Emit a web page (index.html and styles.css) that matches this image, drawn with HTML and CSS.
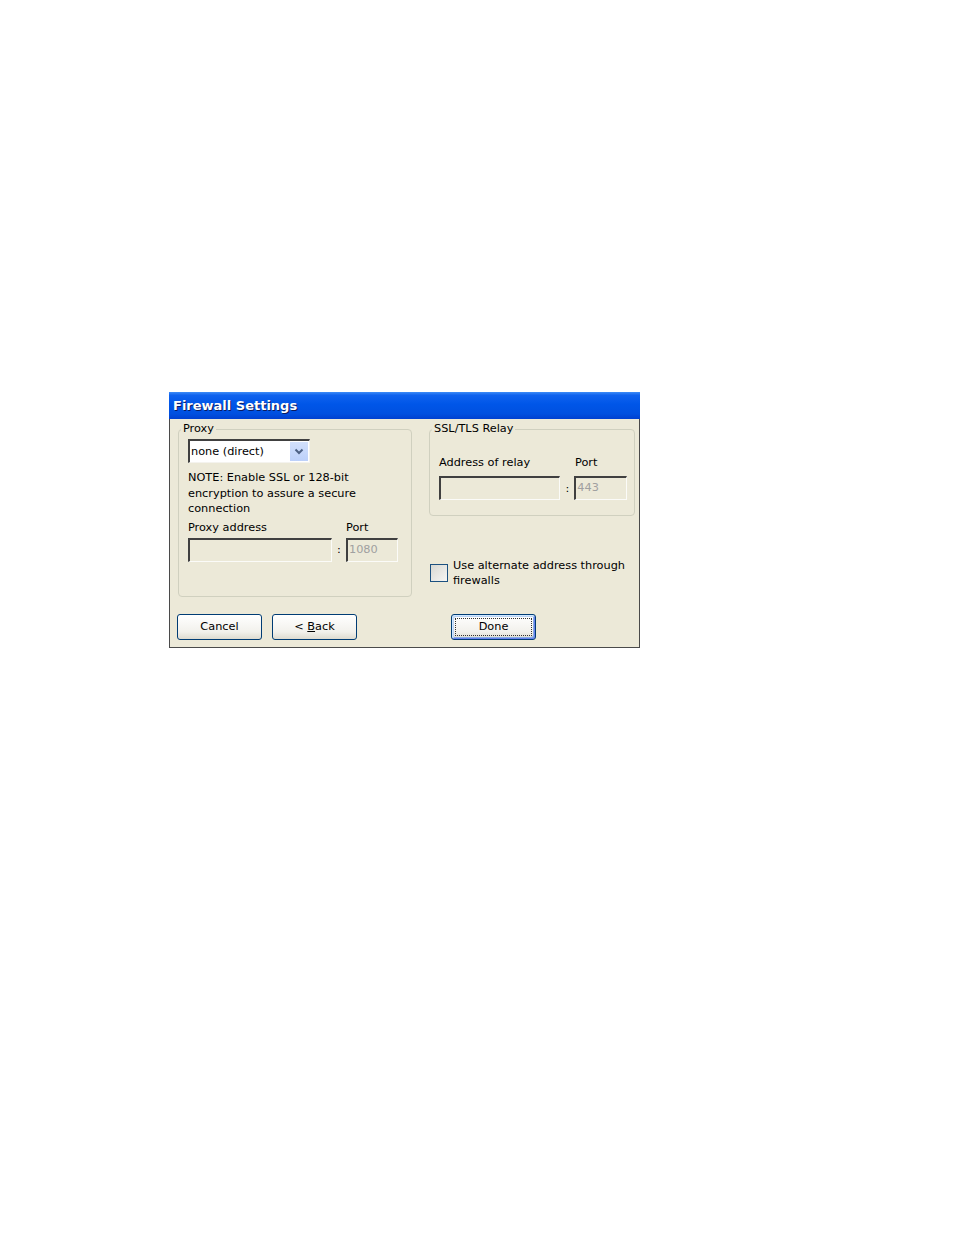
FILE: index.html
```html
<!DOCTYPE html>
<html lang="en">
<head>
    <meta charset="UTF-8">
    <title>Firewall Settings</title>
    <link rel="stylesheet" href="styles.css">
</head>
<body>
    <div class="dialog">
        <div class="titlebar">Firewall Settings</div>
        <div class="dialog-body">
            <div class="columns">
                <fieldset class="group proxy">
                    <legend>Proxy</legend>
                    <div class="combo">
                        <span class="combo-text">none (direct)</span>
                        <span class="combo-btn">
                            <svg width="10" height="7" viewBox="0 0 10 7"><path d="M1.5 1.5 L5 5 L8.5 1.5" fill="none" stroke="#4d6185" stroke-width="2"/></svg>
                        </span>
                    </div>
                    <p class="note">NOTE: Enable SSL or 128-bit encryption to assure a secure connection</p>
                    <div class="labels">
                        <span class="lbl-addr">Proxy address</span>
                        <span>Port</span>
                    </div>
                    <div class="field-row">
                        <div class="edit addr-left"></div>
                        <span class="colon">:</span>
                        <div class="edit port">1080</div>
                    </div>
                </fieldset>

                <div class="right-col">
                    <fieldset class="group relay">
                        <legend>SSL/TLS Relay</legend>
                        <div class="labels">
                            <span class="lbl-relay">Address of relay</span>
                            <span class="lbl-port">Port</span>
                        </div>
                        <div class="field-row">
                            <div class="edit addr-right"></div>
                            <span class="colon">:</span>
                            <div class="edit port">443</div>
                        </div>
                    </fieldset>
                    <div class="check">
                        <span class="box"></span>
                        <span class="check-text">Use alternate address through firewalls</span>
                    </div>
                </div>
            </div>

            <div class="buttons">
                <button class="btn">Cancel</button>
                <button class="btn">&lt; <u>B</u>ack</button>
                <button class="btn btn-default"><span class="focus">Done</span></button>
            </div>
        </div>
    </div>
</body>
</html>
```

FILE: styles.css
```css
body {
    margin: 0;
    background: white;
    font-family: 'DejaVu Sans', sans-serif;
    font-size: 11.3px;
    color: black;
}
.dialog {
    width: 469px;
    margin: 392px 0 0 169px;
    background: #ece9d8;
    border: 1px solid #4a4a4a;
    border-top: none;
}
.titlebar {
    height: 27px;
    line-height: 27px;
    padding-left: 4px;
    background: linear-gradient(#3d8cf7 0%, #0f62ee 12%, #0056e8 45%, #0050e0 80%, #0040d0 100%);
    color: white;
    font-weight: bold;
    font-size: 13px;
    text-shadow: 1px 1px 0 #0a1a60;
    margin: 0 -1px;
}
.dialog-body {
    padding: 3px 4px 7px 8px;
}
.columns {
    display: flex;
    gap: 17px;
}

/* group boxes */
.group {
    margin: 0;
    border: 1px solid #d0d0bf;
    border-radius: 4px;
    padding: 3px 7px 34px 9px;
    min-width: 0;
}
.group legend {
    padding: 0 2px;
    margin-left: -7px;
    line-height: 14px;
}
.proxy {
    width: 234px;
    flex-shrink: 0;
    box-sizing: border-box;
}
.relay {
    width: 206px;
    box-sizing: border-box;
    padding-top: 18px;
    padding-bottom: 15px;
}
.right-col {
    width: 206px;
    flex-shrink: 0;
    display: flex;
    flex-direction: column;
}

/* combo box */
.combo {
    width: 122px;
    height: 24px;
    box-sizing: border-box;
    background: white;
    border-top: 2px solid #404040;
    border-left: 2px solid #404040;
    border-right: 1px solid #f4f3ee;
    border-bottom: 1px solid #f4f3ee;
    display: flex;
    align-items: center;
    justify-content: space-between;
    padding-left: 1px;
}
.combo-text {
    margin-top: -1px;
}
.combo-btn {
    width: 18px;
    height: 19px;
    margin-right: 1px;
    background: linear-gradient(#d2e0fc, #bcd0fa);
    display: flex;
    align-items: center;
    justify-content: center;
}
.note {
    margin: 7px 0 0;
    line-height: 15.5px;
    width: 210px;
}
.labels {
    display: flex;
    margin-top: 4px;
    line-height: 14px;
}
.relay .labels {
    margin-top: 0;
    align-items: flex-end;
}
.lbl-addr {
    width: 158px;
}
.lbl-relay {
    width: 136px;
    padding-top: 2px;
}
.field-row {
    display: flex;
    align-items: center;
    margin-top: 3px;
}
.relay .field-row {
    margin-top: 6px;
}

/* disabled edit fields */
.edit {
    height: 24px;
    box-sizing: border-box;
    border-top: 2px solid #404040;
    border-left: 2px solid #404040;
    border-right: 1px solid #fbfbf8;
    border-bottom: 1px solid #fbfbf8;
    color: #a0a0a0;
    line-height: 20px;
    padding-left: 1px;
}
.addr-left {
    width: 144px;
}
.addr-right {
    width: 122px;
}
.port {
    width: 52px;
}
.relay .port {
    width: 53px;
}
.colon {
    width: 14px;
    text-align: center;
}

/* checkbox */
.check {
    display: flex;
    align-items: center;
    gap: 5px;
    margin: 42px 0 0 1px;
}
.box {
    width: 18px;
    height: 18px;
    box-sizing: border-box;
    border: 1px solid #1c5180;
    background: linear-gradient(135deg, #d8d8d2, #f6f6f4);
    flex-shrink: 0;
}
.check-text {
    line-height: 15px;
    width: 182px;
}

/* push buttons */
.buttons {
    display: flex;
    margin: 17px 0 0 -1px;
    gap: 10px;
}
.btn {
    width: 85px;
    height: 26px;
    font-family: inherit;
    font-size: 11.3px;
    color: black;
    border: 1px solid #003c74;
    border-radius: 3px;
    background: linear-gradient(#ffffff, #f2f1ec 70%, #dedbd0);
    padding: 0;
}
.btn-default {
    margin-left: 84px;
    box-shadow: inset 1px 1px 0 #cee7ff, inset -1px -1px 0 #6982ee, inset 2px 2px 0 #bcd4f6, inset -2px -2px 0 #89ade4;
}
.focus {
    display: block;
    margin: 0 3px;
    height: 18px;
    line-height: 16px;
    border: 1px dotted #333;
    box-sizing: border-box;
}
```
